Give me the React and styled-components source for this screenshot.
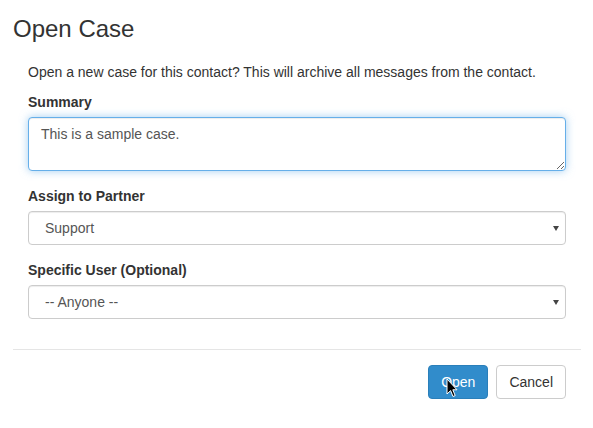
import React, { useEffect, useRef } from 'react';
import styled, { createGlobalStyle } from 'styled-components';

const GlobalStyle = createGlobalStyle`
  body {
    margin: 0;
    background: #fff;
    font-family: "Liberation Sans", Arial, sans-serif;
    font-size: 14px;
    line-height: 20px;
    color: #333;
  }
  * { box-sizing: border-box; }
`;

const Modal = styled.div`
  width: 593px;
  padding: 0 12px 0 13px;
`;

const Title = styled.h4`
  margin: 0;
  padding-top: 13px;
  font-size: 24px;
  line-height: 32px;
  font-weight: 400;
  color: #333;
`;

const Body = styled.div`
  padding: 17px 15px 30px;
  border-bottom: 1px solid #e5e5e5;
`;

const Intro = styled.p`
  margin: 0 0 10px;
`;

const Group = styled.div`
  margin-bottom: ${p => (p.last ? 0 : '15px')};
`;

const Label = styled.label`
  display: block;
  font-weight: 700;
  margin-bottom: 5px;
`;

const TextArea = styled.textarea`
  display: block;
  width: 100%;
  height: 54px;
  padding: 6px 12px;
  font: inherit;
  color: #555;
  caret-color: #222;
  border: 1px solid #66afe9;
  border-radius: 4px;
  outline: 0;
  box-shadow: inset 0 1px 1px rgba(0, 0, 0, 0.075), 0 0 8px rgba(102, 175, 233, 0.6);
  resize: vertical;
`;

const SelectWrap = styled.div`
  position: relative;

  &::after {
    content: '';
    position: absolute;
    right: 7px;
    top: 15px;
    border-left: 3px solid transparent;
    border-right: 3px solid transparent;
    border-top: 5px solid #444;
    pointer-events: none;
  }
`;

const Select = styled.select`
  display: block;
  width: 100%;
  height: 34px;
  padding: 0 24px 0 16px;
  font: inherit;
  color: #555;
  background: #fff;
  border: 1px solid #ccc;
  border-radius: 4px;
  box-shadow: inset 0 1px 1px rgba(0, 0, 0, 0.075);
  appearance: none;
  outline: 0;
`;

const Footer = styled.div`
  display: flex;
  justify-content: flex-end;
  gap: 8px;
  padding: 15px 15px 0;
`;

const Button = styled.button`
  position: relative;
  height: 34px;
  padding: 6px 12px;
  font: inherit;
  border-radius: 4px;
  border: 1px solid ${p => (p.primary ? '#2a7fba' : '#ccc')};
  background: ${p => (p.primary ? '#318ccb' : '#fff')};
  color: ${p => (p.primary ? '#fff' : '#333')};
`;

const Pointer = styled.svg`
  position: absolute;
  left: 17px;
  top: 12px;
  pointer-events: none;
`;

export default function App() {
  const summaryRef = useRef(null);

  useEffect(() => {
    const el = summaryRef.current;
    if (el) {
      el.focus();
      el.setSelectionRange(el.value.length, el.value.length);
    }
  }, []);

  return (
    <>
      <GlobalStyle />
      <Modal>
        <Title>Open Case</Title>
        <Body>
          <Intro>Open a new case for this contact? This will archive all messages from the contact.</Intro>
          <Group>
            <Label>Summary</Label>
            <TextArea ref={summaryRef} defaultValue="This is a sample case." />
          </Group>
          <Group>
            <Label>Assign to Partner</Label>
            <SelectWrap>
              <Select defaultValue="support">
                <option value="support">Support</option>
              </Select>
            </SelectWrap>
          </Group>
          <Group last>
            <Label>Specific User (Optional)</Label>
            <SelectWrap>
              <Select defaultValue="">
                <option value="">-- Anyone --</option>
              </Select>
            </SelectWrap>
          </Group>
        </Body>
        <Footer>
          <Button primary>
            Open
            <Pointer width="12" height="20" viewBox="0 0 12 20">
              <path d="M1 1 L1 16 L4.6 12.6 L7 18.5 L9.2 17.6 L6.8 11.8 L11 11.8 Z" fill="#000" stroke="#fff" strokeWidth="1" />
            </Pointer>
          </Button>
          <Button>Cancel</Button>
        </Footer>
      </Modal>
    </>
  );
}
